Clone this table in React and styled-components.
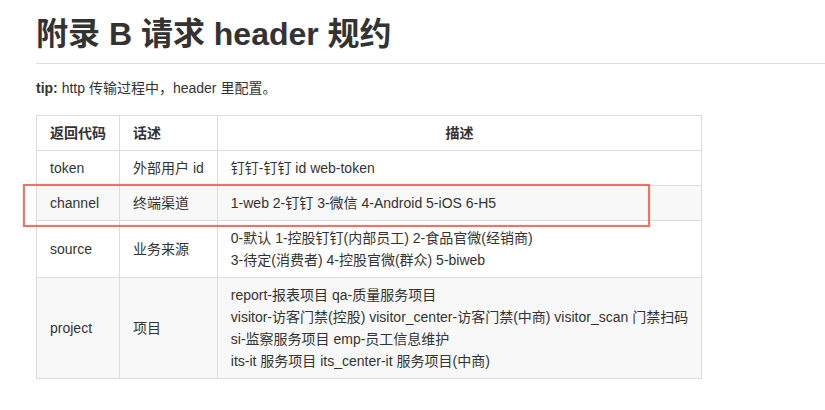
import React from "react";
import styled, { createGlobalStyle } from "styled-components";

const GlobalStyle = createGlobalStyle`
  html, body {
    margin: 0;
    padding: 0;
    background: #fff;
  }
  body {
    font-family: "Liberation Sans", "Noto Sans CJK SC", sans-serif;
    color: #333;
  }
`;

const rows = [
  { code: "token", name: "外部用户 id", desc: ["钉钉-钉钉 id web-token"] },
  { code: "channel", name: "终端渠道", desc: ["1-web 2-钉钉 3-微信 4-Android 5-iOS 6-H5"] },
  {
    code: "source",
    name: "业务来源",
    desc: [
      "0-默认 1-控股钉钉(内部员工) 2-食品官微(经销商)",
      "3-待定(消费者) 4-控股官微(群众) 5-biweb",
    ],
  },
  {
    code: "project",
    name: "项目",
    desc: [
      "report-报表项目 qa-质量服务项目",
      "visitor-访客门禁(控股) visitor_center-访客门禁(中商) visitor_scan 门禁扫码",
      "si-监察服务项目 emp-员工信息维护",
      "its-it 服务项目 its_center-it 服务项目(中商)",
    ],
  },
];

export default function App() {
  return (
    <Page>
      <GlobalStyle />
      <Title>附录 B 请求 header 规约</Title>
      <Tip>
        <strong>tip:</strong> http 传输过程中，header 里配置。
      </Tip>
      <Table>
        <thead>
          <tr>
            <Th>返回代码</Th>
            <Th>话述</Th>
            <Th $center>描述</Th>
          </tr>
        </thead>
        <tbody>
          {rows.map((r) => (
            <Row key={r.code}>
              <Td>{r.code}</Td>
              <Td>{r.name}</Td>
              <Td>
                {r.desc.map((line) => (
                  <Line key={line}>{line}</Line>
                ))}
              </Td>
            </Row>
          ))}
        </tbody>
      </Table>
      <Highlight />
    </Page>
  );
}

const Page = styled.div`
  position: relative;
  padding: 1px 0 40px 36px;
  font-size: 14px;
`;

const Title = styled.h1`
  margin: 14px 0 0;
  padding-bottom: 10px;
  font-size: 32px;
  font-weight: bold;
  line-height: 1.2;
  color: #333;
  border-bottom: 1px solid #ddd;
`;

const Tip = styled.p`
  margin: 13px 0 16px;
  line-height: 22px;
  strong {
    font-weight: bold;
  }
`;

const Table = styled.table`
  border-collapse: collapse;
  border-spacing: 0;
  line-height: 22px;
`;

const Row = styled.tr`
  background: #fff;
  &:nth-child(2n) {
    background: #f8f8f8;
  }
`;

const Th = styled.th`
  padding: 6px 13px;
  border: 1px solid #ddd;
  font-weight: bold;
  white-space: nowrap;
  text-align: ${(p) => (p.$center ? "center" : "left")};
`;

const Td = styled.td`
  padding: 6px 13px;
  border: 1px solid #ddd;
  white-space: nowrap;
  vertical-align: middle;
`;

const Line = styled.div`
  white-space: nowrap;
`;

const Highlight = styled.div`
  position: absolute;
  left: 23px;
  top: 184px;
  width: 627px;
  height: 43px;
  box-sizing: border-box;
  border: 2px solid rgba(242, 88, 78, 0.85);
  box-shadow: 0 0 1px rgba(242, 88, 78, 0.6);
  pointer-events: none;
`;
